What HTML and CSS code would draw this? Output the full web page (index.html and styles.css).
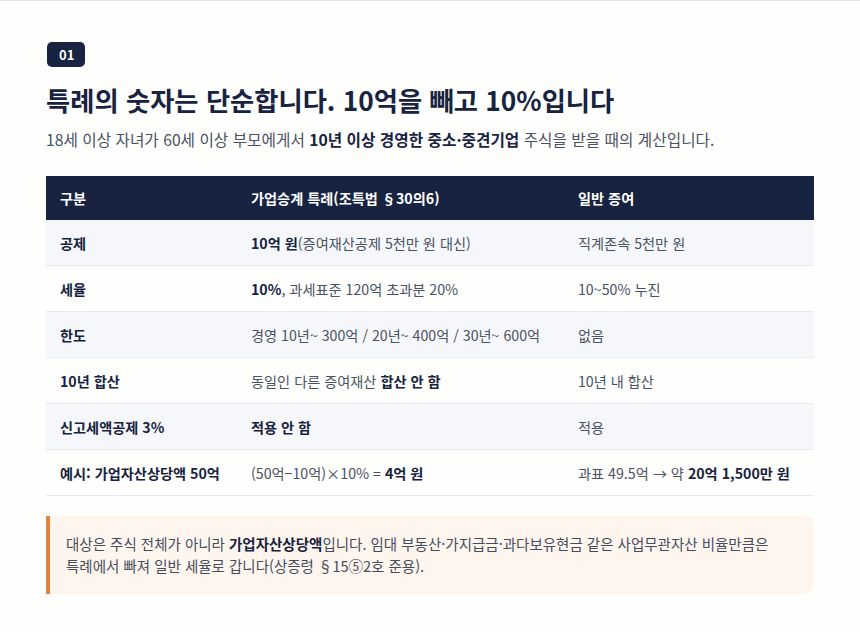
FILE: index.html
```html
<!DOCTYPE html>
<html lang="ko">
<head>
<meta charset="utf-8">
<link rel="stylesheet" href="styles.css">
</head>
<body>
<div class="topline"></div>
<main class="page">
  <span class="badge">01</span>
  <h1 class="title">특례의 숫자는 단순합니다. 10억을 빼고 10%입니다</h1>
  <p class="lead">18세 이상 자녀가 60세 이상 부모에게서 <b>10년 이상 경영한 중소·중견기업</b> 주식을 받을 때의 계산입니다.</p>
  <table class="cmp">
    <colgroup><col class="c1"><col class="c2"><col class="c3"></colgroup>
    <thead>
      <tr><th>구분</th><th>가업승계 특례(조특법 §30의6)</th><th>일반 증여</th></tr>
    </thead>
    <tbody>
      <tr><td>공제</td><td><b>10억 원</b>(증여재산공제 5천만 원 대신)</td><td>직계존속 5천만 원</td></tr>
      <tr><td>세율</td><td><b>10%</b>, 과세표준 120억 초과분 20%</td><td>10~50% 누진</td></tr>
      <tr><td>한도</td><td>경영 10년~ 300억 / 20년~ 400억 / 30년~ 600억</td><td>없음</td></tr>
      <tr><td>10년 합산</td><td>동일인 다른 증여재산 <b>합산 안 함</b></td><td>10년 내 합산</td></tr>
      <tr><td>신고세액공제 3%</td><td><b>적용 안 함</b></td><td>적용</td></tr>
      <tr><td>예시: 가업자산상당액 50억</td><td>(50억−10억)×10% = <b>4억 원</b></td><td>과표 49.5억 → 약 <b>20억 1,500만 원</b></td></tr>
    </tbody>
  </table>
  <div class="note">대상은 주식 전체가 아니라 <b>가업자산상당액</b>입니다. 임대 부동산·가지급금·과다보유현금 같은 사업무관자산 비율만큼은 특례에서 빠져 일반 세율로 갑니다(상증령 §15⑤2호 준용).</div>
</main>
</body>
</html>
```
FILE: styles.css
```css
html, body {
  margin: 0;
  padding: 0;
  background: #fefefd;
}
body {
  font-family: "Noto Sans CJK KR", "Noto Sans", sans-serif;
  color: #1a2440;
}
.topline {
  height: 1px;
  background: #e4e4e4;
}
.page {
  padding: 41px 46px 0 46px;
  display: flex;
  flex-direction: column;
  align-items: flex-start;
}
.badge {
  display: inline-block;
  margin-left: 1px;
  background: #172340;
  color: #fff;
  font-weight: 700;
  font-size: 13px;
  line-height: 25px;
  height: 25px;
  padding: 0 11px 0 12px;
  border-radius: 5px;
}
.title {
  margin: 16px 0 0 0;
  font-size: 26.3px;
  line-height: 34px;
  font-weight: 700;
  color: #172340;
}
.lead {
  margin: 12px 0 0 0;
  font-size: 15.7px;
  line-height: 22px;
  color: #4a5263;
}
.lead b {
  color: #172340;
  font-weight: 700;
}
.cmp {
  margin-top: 25px;
  width: 768px;
  border-collapse: collapse;
  font-size: 14.2px;
  table-layout: fixed;
}
.c1 { width: 191px; }
.c2 { width: 327px; }
.c3 { width: 250px; }
.cmp th {
  background: #172340;
  color: #fff;
  font-weight: 700;
  text-align: left;
  height: 44px;
  padding: 0 14px;
}
.cmp td {
  height: 45px;
  padding: 0 14px;
  color: #4a5263;
  border-bottom: 1px solid #e7eaef;
}
.cmp tbody tr:nth-child(odd) td {
  background: #f5f7fa;
}
.cmp td:first-child {
  font-weight: 700;
  color: #172340;
}
.cmp td b {
  color: #172340;
  font-weight: 700;
}
.note {
  margin-top: 20px;
  width: 728px;
  background: #fef6ee;
  border-left: 4px solid #e0843d;
  border-radius: 0 10px 10px 0;
  padding: 17px 20px 17px 16px;
  font-size: 14.5px;
  line-height: 22px;
  color: #454d5c;
  word-break: keep-all;
}
.note b {
  color: #172340;
  font-weight: 700;
}
```
